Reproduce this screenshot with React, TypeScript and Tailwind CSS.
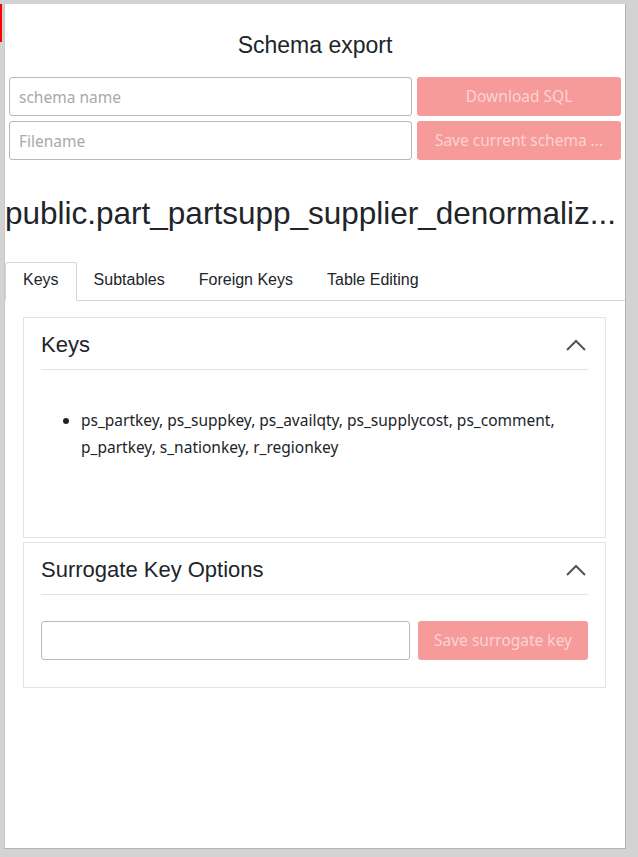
import React from 'react'

const sans = { fontFamily: '"Liberation Sans", Arial, sans-serif' }
const ui = { fontFamily: '"Noto Sans", "Open Sans", sans-serif' }

const ChevronUp = () => (
  <svg width="20" height="12" viewBox="0 0 20 12" fill="none" stroke="#555" strokeWidth="2">
    <polyline points="1,11 10,2 19,11" />
  </svg>
)

const Card: React.FC<{ title: string; children: React.ReactNode; className?: string }> = ({
  title,
  children,
  className = '',
}) => (
  <div className={`border border-[#e3e3e3] bg-white px-[17px] ${className}`}>
    <div className="flex items-center justify-between border-b border-[#e3e3e3] pt-[14px] pb-[11px]">
      <h4 className="text-[22px] leading-[26px] text-[#212529]" style={sans}>
        {title}
      </h4>
      <span className="mr-[2px]">
        <ChevronUp />
      </span>
    </div>
    {children}
  </div>
)

export default function App() {
  const tabs = ['Keys', 'Subtables', 'Foreign Keys', 'Table Editing']

  return (
    <div className="flex h-screen bg-[#d3d3d3] pt-[4px] pr-[12px]">
      {/* left strip */}
      <div className="w-[4px] shrink-0">
        <div className="h-[38px] w-[2px] bg-[#ff0000]" />
      </div>

      <div className="flex h-[845px] min-w-0 flex-1 flex-col border-l border-r border-b border-l-[#c9c9c9] border-r-[#b3b3b3] border-b-[#b3b3b3] bg-white pt-[26px]">
        {/* Schema export */}
        <h2 className="mb-[17px] text-center text-[23px] leading-[30px] text-[#212529]" style={sans}>
          Schema export
        </h2>
        <div className="flex flex-col gap-[5px] px-[4px]" style={ui}>
          <div className="flex gap-[5px]">
            <input
              placeholder="schema name"
              className="h-[39px] w-[403px] rounded-[3px] border border-[#b8b8b8] px-[9px] text-[15.5px] text-[#333] placeholder:text-[#a9a9a9] outline-none"
            />
            <button className="h-[39px] min-w-0 flex-1 rounded-[3px] bg-[#f69a9a] text-[15.5px] text-[#fcd3d3]">
              Download SQL
            </button>
          </div>
          <div className="flex gap-[5px]">
            <input
              placeholder="Filename"
              className="h-[39px] w-[403px] rounded-[3px] border border-[#b8b8b8] px-[9px] text-[15.5px] text-[#333] placeholder:text-[#a9a9a9] outline-none"
            />
            <button className="h-[39px] min-w-0 flex-1 whitespace-nowrap rounded-[3px] bg-[#f69a9a] text-[15.5px] text-[#fcd3d3]">
              Save current schema ...
            </button>
          </div>
        </div>

        {/* Table name */}
        <h1 className="mt-[35px] whitespace-nowrap text-[31.5px] leading-[36px] text-[#212529]" style={sans}>
          public.part_partsupp_supplier_denormaliz...
        </h1>

        {/* Tabs */}
        <div className="mt-[31px] flex border-b border-[#d6d6d6]" style={sans}>
          {tabs.map((t, i) => (
            <div
              key={t}
              className={`-mb-px h-[39px] text-[16px] leading-[33px] text-[#212529] ${
                i === 0
                  ? 'rounded-t-[3px] border border-[#d6d6d6] border-b-white bg-white px-[17px]'
                  : 'border border-transparent px-[16px]'
              }`}
            >
              {t}
            </div>
          ))}
        </div>

        {/* Tab content */}
        <div className="flex flex-col gap-[4px] pt-[16px] pl-[18px] pr-[19px]">
          <Card title="Keys">
            <ul className="list-disc pt-[37px] pb-[76px] pl-[40px] text-[15.5px] leading-[27px] text-[#212529]" style={ui}>
              <li>
                ps_partkey, ps_suppkey, ps_availqty, ps_supplycost, ps_comment, p_partkey, s_nationkey, r_regionkey
              </li>
            </ul>
          </Card>
          <Card title="Surrogate Key Options">
            <div className="flex gap-[8px] pt-[26px] pb-[27px]" style={ui}>
              <input className="h-[39px] w-[369px] rounded-[3px] border border-[#b8b8b8] px-[9px] text-[16px] outline-none" />
              <button className="h-[39px] min-w-0 flex-1 rounded-[3px] bg-[#f69a9a] text-[15.5px] text-[#fcd3d3]">
                Save surrogate key
              </button>
            </div>
          </Card>
        </div>
      </div>
    </div>
  )
}
